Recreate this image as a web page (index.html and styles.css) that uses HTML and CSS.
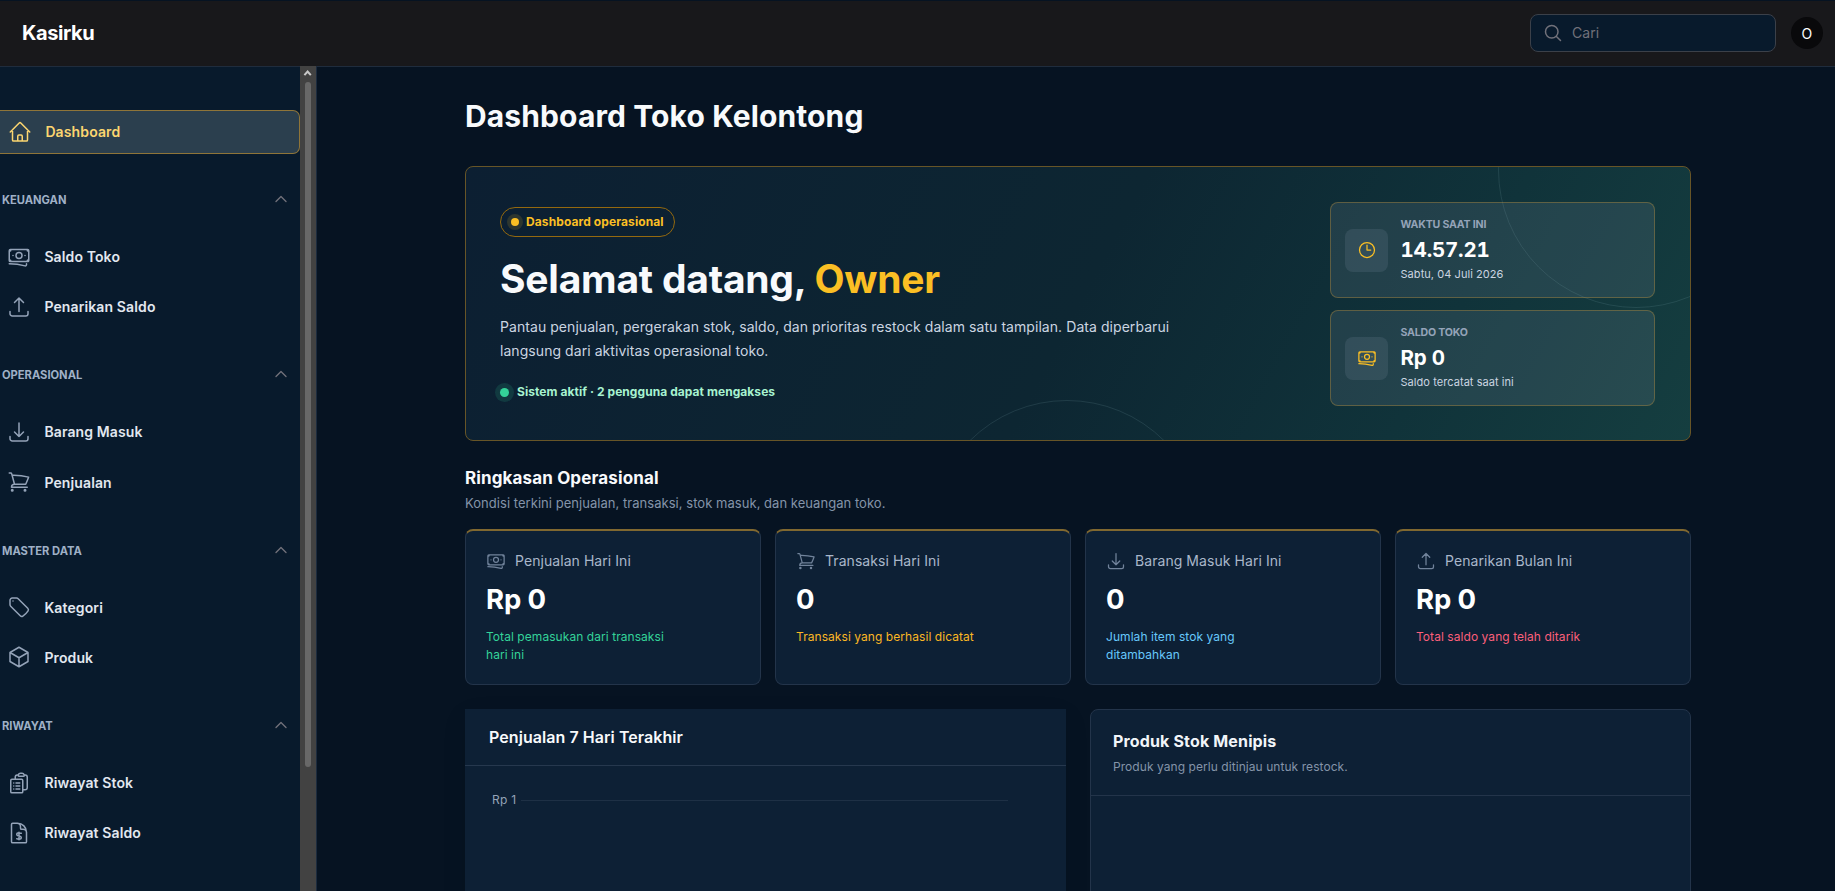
FILE: index.html
```html
<!DOCTYPE html>
<html lang="id">
<head>
<meta charset="utf-8">
<title>Dashboard Toko Kelontong - Kasirku</title>
<link rel="stylesheet" href="styles.css">
</head>
<body>
<svg class="sprite" aria-hidden="true">
  <symbol id="home" viewBox="0 0 24 24"><path d="m2.25 12 8.954-8.955c.44-.439 1.152-.439 1.591 0L21.75 12M4.5 9.75v10.125c0 .621.504 1.125 1.125 1.125H9.75v-4.875c0-.621.504-1.125 1.125-1.125h2.25c.621 0 1.125.504 1.125 1.125V21h4.125c.621 0 1.125-.504 1.125-1.125V9.75M8.25 21h8.25"/></symbol>
  <symbol id="banknotes" viewBox="0 0 24 24"><path d="M2.25 18.75a60.07 60.07 0 0 1 15.797 2.101c.727.198 1.453-.342 1.453-1.096V18.75M3.75 4.5v.75A.75.75 0 0 1 3 6h-.75m0 0v-.375c0-.621.504-1.125 1.125-1.125H20.25M2.25 6v9m18-10.5v.75c0 .414.336.75.75.75h.75m-1.5-1.5h.375c.621 0 1.125.504 1.125 1.125v9.75c0 .621-.504 1.125-1.125 1.125h-.375m1.5-1.5H21a.75.75 0 0 0-.75.75v.75m0 0H3.75m0 0h-.375a1.125 1.125 0 0 1-1.125-1.125V15m1.5 1.5v-.75A.75.75 0 0 0 3 15h-.75M15 10.5a3 3 0 1 1-6 0 3 3 0 0 1 6 0Zm3 0h.008v.008H18V10.5Zm-12 0h.008v.008H6V10.5Z"/></symbol>
  <symbol id="upload" viewBox="0 0 24 24"><path d="M3 16.5v2.25A2.25 2.25 0 0 0 5.25 21h13.5A2.25 2.25 0 0 0 21 18.75V16.5m-13.5-9L12 3m0 0 4.5 4.5M12 3v13.5"/></symbol>
  <symbol id="download" viewBox="0 0 24 24"><path d="M3 16.5v2.25A2.25 2.25 0 0 0 5.25 21h13.5A2.25 2.25 0 0 0 21 18.75V16.5M16.5 12 12 16.5m0 0L7.5 12m4.5 4.5V3"/></symbol>
  <symbol id="cart" viewBox="0 0 24 24"><path d="M2.25 3h1.386c.51 0 .955.343 1.087.835l.383 1.437M7.5 14.25a3 3 0 0 0-3 3h15.75m-12.75-3h11.218c1.121-2.3 2.1-4.684 2.924-7.138a60.114 60.114 0 0 0-16.536-1.84M7.5 14.25 5.106 5.272M6 20.25a.75.75 0 1 1-1.5 0 .75.75 0 0 1 1.5 0Zm12.75 0a.75.75 0 1 1-1.5 0 .75.75 0 0 1 1.5 0Z"/></symbol>
  <symbol id="tag" viewBox="0 0 24 24"><path d="M9.568 3H5.25A2.25 2.25 0 0 0 3 5.25v4.318c0 .597.237 1.17.659 1.591l9.581 9.581c.699.699 1.78.872 2.607.33a18.095 18.095 0 0 0 5.223-5.223c.542-.827.369-1.908-.33-2.607L11.16 3.66A2.25 2.25 0 0 0 9.568 3ZM6 6h.008v.008H6V6Z"/></symbol>
  <symbol id="cube" viewBox="0 0 24 24"><path d="m21 7.5-9-5.25L3 7.5m18 0-9 5.25m9-5.25v9l-9 5.25M3 7.5l9 5.25M3 7.5v9l9 5.25m0-9v9"/></symbol>
  <symbol id="clipboard" viewBox="0 0 24 24"><path d="M9 12h3.75M9 15h3.75M9 18h3.75m3 .75H18a2.25 2.25 0 0 0 2.25-2.25V6.108c0-1.135-.845-2.098-1.976-2.192a48.424 48.424 0 0 0-1.123-.08m-5.801 0c-.065.21-.1.433-.1.664 0 .414.336.75.75.75h4.5a.75.75 0 0 0 .75-.75 2.25 2.25 0 0 0-.1-.664m-5.8 0A2.251 2.251 0 0 1 13.5 2.25H15c1.012 0 1.867.668 2.15 1.586m-5.8 0c-.376.023-.75.05-1.124.08C9.095 4.01 8.25 4.973 8.25 6.108V8.25m0 0H4.875c-.621 0-1.125.504-1.125 1.125v11.25c0 .621.504 1.125 1.125 1.125h9.75c.621 0 1.125-.504 1.125-1.125V9.375c0-.621-.504-1.125-1.125-1.125H8.25ZM6.75 12h.008v.008H6.75V12Zm0 3h.008v.008H6.75V15Zm0 3h.008v.008H6.75V18Z"/></symbol>
  <symbol id="dollar-doc" viewBox="0 0 24 24"><path d="M19.5 14.25v-2.625a3.375 3.375 0 0 0-3.375-3.375h-1.5A1.125 1.125 0 0 1 13.5 7.125v-1.5a3.375 3.375 0 0 0-3.375-3.375H8.25m3.75 9v7.5m2.25-6.466a9.016 9.016 0 0 0-3.461-.203c-.536.072-.974.478-1.021 1.017a4.559 4.559 0 0 0-.018.402c0 .464.336.844.775.994l2.95 1.012c.44.15.775.53.775.994 0 .136-.006.27-.018.402-.047.539-.485.945-1.021 1.017a9.077 9.077 0 0 1-3.461-.203M10.5 2.25H5.625c-.621 0-1.125.504-1.125 1.125v17.25c0 .621.504 1.125 1.125 1.125h12.75c.621 0 1.125-.504 1.125-1.125V11.25a9 9 0 0 0-9-9Z"/></symbol>
  <symbol id="clock" viewBox="0 0 24 24"><path d="M12 6v6h4.5m4.5 0a9 9 0 1 1-18 0 9 9 0 0 1 18 0Z"/></symbol>
  <symbol id="search" viewBox="0 0 24 24"><path d="m21 21-5.197-5.197m0 0A7.5 7.5 0 1 0 5.196 5.196a7.5 7.5 0 0 0 10.607 10.607Z"/></symbol>
  <symbol id="chevron" viewBox="0 0 24 24"><path d="m4.5 15.75 7.5-7.5 7.5 7.5"/></symbol>
</svg>

<header class="topbar">
  <div class="brand">Kasirku</div>
  <div class="search"><svg class="icon icon-20"><use href="#search"/></svg><span>Cari</span></div>
  <div class="avatar">O</div>
</header>

<div class="shell">
  <aside class="sidebar">
    <nav class="nav">
      <a class="item active"><svg class="icon"><use href="#home"/></svg><span>Dashboard</span></a>

      <section class="group">
        <div class="group-head"><span>KEUANGAN</span><svg class="icon icon-16"><use href="#chevron"/></svg></div>
        <a class="item"><svg class="icon"><use href="#banknotes"/></svg><span>Saldo Toko</span></a>
        <a class="item"><svg class="icon"><use href="#upload"/></svg><span>Penarikan Saldo</span></a>
      </section>

      <section class="group">
        <div class="group-head"><span>OPERASIONAL</span><svg class="icon icon-16"><use href="#chevron"/></svg></div>
        <a class="item"><svg class="icon"><use href="#download"/></svg><span>Barang Masuk</span></a>
        <a class="item"><svg class="icon"><use href="#cart"/></svg><span>Penjualan</span></a>
      </section>

      <section class="group">
        <div class="group-head"><span>MASTER DATA</span><svg class="icon icon-16"><use href="#chevron"/></svg></div>
        <a class="item"><svg class="icon"><use href="#tag"/></svg><span>Kategori</span></a>
        <a class="item"><svg class="icon"><use href="#cube"/></svg><span>Produk</span></a>
      </section>

      <section class="group">
        <div class="group-head"><span>RIWAYAT</span><svg class="icon icon-16"><use href="#chevron"/></svg></div>
        <a class="item"><svg class="icon"><use href="#clipboard"/></svg><span>Riwayat Stok</span></a>
        <a class="item"><svg class="icon"><use href="#dollar-doc"/></svg><span>Riwayat Saldo</span></a>
      </section>
    </nav>
    <div class="scrollbar">
      <svg class="scroll-arrow" viewBox="0 0 16 16"><path d="M4.4 9.1 7.6 5.5l3.2 3.6"/></svg>
      <div class="thumb"></div>
    </div>
  </aside>

  <main class="main">
    <h1 class="page-title">Dashboard Toko Kelontong</h1>

    <section class="hero">
      <div class="ring ring-right"></div>
      <div class="ring ring-bottom"></div>
      <div class="hero-copy">
        <div class="badge"><i class="dot"></i><span>Dashboard operasional</span></div>
        <h2 class="hero-title">Selamat datang, <em>Owner</em></h2>
        <p class="hero-text">Pantau penjualan, pergerakan stok, saldo, dan prioritas restock dalam satu tampilan. Data diperbarui langsung dari aktivitas operasional toko.</p>
        <div class="status"><i class="dot green"></i>Sistem aktif · 2 pengguna dapat mengakses</div>
      </div>
      <div class="hero-side">
        <div class="info">
          <div class="info-icon"><svg class="icon icon-20"><use href="#clock"/></svg></div>
          <div class="info-body"><div class="info-label">WAKTU SAAT INI</div><div class="info-value">14.57.21</div><div class="info-sub">Sabtu, 04 Juli 2026</div></div>
        </div>
        <div class="info">
          <div class="info-icon"><svg class="icon icon-20"><use href="#banknotes"/></svg></div>
          <div class="info-body"><div class="info-label">SALDO TOKO</div><div class="info-value">Rp 0</div><div class="info-sub">Saldo tercatat saat ini</div></div>
        </div>
      </div>
    </section>

    <h3 class="section-title">Ringkasan Operasional</h3>
    <p class="section-sub">Kondisi terkini penjualan, transaksi, stok masuk, dan keuangan toko.</p>

    <section class="stats">
      <article class="stat">
        <div class="stat-head"><svg class="icon icon-20"><use href="#banknotes"/></svg><span>Penjualan Hari Ini</span></div>
        <div class="stat-value">Rp 0</div>
        <p class="stat-note success">Total pemasukan dari transaksi hari ini</p>
      </article>
      <article class="stat">
        <div class="stat-head"><svg class="icon icon-20"><use href="#cart"/></svg><span>Transaksi Hari Ini</span></div>
        <div class="stat-value">0</div>
        <p class="stat-note warning">Transaksi yang berhasil dicatat</p>
      </article>
      <article class="stat">
        <div class="stat-head"><svg class="icon icon-20"><use href="#download"/></svg><span>Barang Masuk Hari Ini</span></div>
        <div class="stat-value">0</div>
        <p class="stat-note info-tone">Jumlah item stok yang ditambahkan</p>
      </article>
      <article class="stat">
        <div class="stat-head"><svg class="icon icon-20"><use href="#upload"/></svg><span>Penarikan Bulan Ini</span></div>
        <div class="stat-value">Rp 0</div>
        <p class="stat-note danger">Total saldo yang telah ditarik</p>
      </article>
    </section>

    <section class="panels">
      <article class="panel chart">
        <header class="chart-head">Penjualan 7 Hari Terakhir</header>
        <div class="tick"><span>Rp 1</span><i></i></div>
      </article>
      <article class="panel low-stock">
        <header class="low-head">
          <h4>Produk Stok Menipis</h4>
          <p>Produk yang perlu ditinjau untuk restock.</p>
        </header>
      </article>
    </section>
  </main>
</div>
</body>
</html>
```
FILE: styles.css
```css
* { box-sizing: border-box; }

body {
  margin: 0;
  height: 891px;
  overflow: hidden;
  display: flex;
  flex-direction: column;
  padding-top: 1px;
  background: #061322;
  font-family: Inter, "Liberation Sans", sans-serif;
  font-size: 14px;
  letter-spacing: 0.06px;
  color: #f8fafc;
}

h1, h2, h3, h4, p { margin: 0; }

.sprite { position: absolute; width: 0; height: 0; }

.icon {
  width: 24px;
  height: 24px;
  flex: none;
  fill: none;
  stroke: currentColor;
  stroke-width: 1.5;
  stroke-linecap: round;
  stroke-linejoin: round;
}
.icon-20 { width: 20px; height: 20px; }
.icon-16 { width: 16px; height: 16px; stroke-width: 2; }

/* Top bar */
.topbar {
  flex: none;
  height: 66px;
  display: flex;
  align-items: center;
  padding: 0 12px 1px 22px;
  background: #18181b;
  border-bottom: 1px solid #1f2c3d;
}
.brand { flex: 1; font-size: 20px; font-weight: 700; letter-spacing: -0.42px; color: #fff; }
.search {
  width: 246px;
  height: 38px;
  display: flex;
  align-items: center;
  gap: 8px;
  padding: 0 12px;
  border: 1px solid #3b4049;
  border-radius: 8px;
  background: #081a2c;
  color: #71717a;
}
.search .icon { stroke-width: 1.8; }
.search span { padding: 0 0 1px 1px; }
.avatar {
  width: 32px;
  height: 32px;
  margin-left: 15px;
  border-radius: 50%;
  display: grid;
  place-items: center;
  background: #09090b;
  color: #fff;
  font-size: 14px;
}

.shell { flex: 1; display: flex; min-height: 0; }

/* Sidebar */
.sidebar {
  flex: none;
  width: 317px;
  display: flex;
  background: #081a2c;
  border-right: 1px solid #1c2b3e;
}
.nav { flex: 1; padding-top: 43px; }
.item {
  height: 44px;
  display: flex;
  align-items: center;
  gap: 13.4px;
  padding-left: 7px;
  color: #e2e8f0;
  font-weight: 600;
  letter-spacing: 0.12px;
}
.item .icon { color: #94a3b8; }
.item + .item { margin-top: 6.2px; }
.item.active {
  padding: 0 0 1px 8px;
  border: 1px solid #8f7539;
  border-left: 0;
  border-radius: 0 7px 7px 0;
  background: #2b3f4e;
  color: #fcd670;
}
.item.active .icon { color: #fcd670; }
.group { height: 175.4px; padding-top: 33px; }
.group-head {
  height: 24px;
  margin-bottom: 23.5px;
  display: flex;
  align-items: center;
  justify-content: space-between;
  padding: 0 11px 0 2px;
  font-size: 11.2px;
  font-weight: 700;
  letter-spacing: -0.02px;
  color: #9fb0c6;
}
.group-head span { padding-top: 2px; }
.group-head .icon { color: #71717a; }
.scrollbar { flex: none; width: 16px; margin-top: -1px; background: #424242; }
.scroll-arrow {
  display: block;
  width: 16px;
  height: 16px;
  fill: none;
  stroke: #c8c8c8;
  stroke-width: 2;
}
.thumb { width: 6px; height: 685px; margin-left: 5px; border-radius: 3px; background: #686868; }

/* Content */
.main { flex: 1; padding: 30px 144px 0 148px; overflow: hidden; }
.page-title { height: 69px; font-size: 30px; line-height: 39px; font-weight: 700; letter-spacing: 0.12px; }

.hero {
  position: relative;
  overflow: hidden;
  height: 275px;
  display: flex;
  justify-content: space-between;
  padding: 35px;
  border: 1px solid #675527;
  border-radius: 8px;
  background: linear-gradient(118deg, #0c1f32 0%, #0d2632 50%, #10333a 78%, #153e40 100%);
}
.ring { position: absolute; width: 276px; height: 276px; border: 1px solid rgba(148, 190, 200, 0.14); border-radius: 50%; }
.ring-right { right: -84px; top: -135px; }
.ring-bottom { left: 463px; top: 233px; }
.hero-copy { width: 700px; padding-top: 5px; margin-left: -1px; }
.badge {
  width: 175px;
  height: 30px;
  display: flex;
  align-items: center;
  gap: 7px;
  padding-left: 10px;
  border: 1px solid #94690f;
  border-radius: 15px;
  color: #fbbf24;
  font-size: 12px;
  font-weight: 700;
  letter-spacing: 0.1px;
}
.badge span { padding-bottom: 1px; }
.dot { width: 8px; height: 8px; border-radius: 50%; background: #fbbf24; box-shadow: 0 0 0 4px rgba(251, 191, 36, 0.14); }
.dot.green { width: 9px; height: 9px; background: #34d399; box-shadow: 0 0 0 5px rgba(52, 211, 153, 0.14); }
.hero-title { margin-top: 18px; font-size: 39px; line-height: 48px; font-weight: 700; letter-spacing: -0.23px; }
.hero-title em { font-style: normal; color: #fbbf24; }
.hero-text { margin-top: 12px; font-size: 14px; line-height: 24px; color: #cbd5e1; }
.status {
  display: flex;
  align-items: center;
  gap: 8px;
  margin-top: 20px;
  line-height: 18px;
  color: #a7f3d0;
  font-size: 12px;
  font-weight: 700;
}
.hero-side { width: 325px; display: grid; grid-template-rows: 96px 96px; gap: 12px; position: relative; }
.info {
  display: flex;
  align-items: center;
  gap: 12.5px;
  padding-left: 14px;
  border: 1px solid rgba(180, 140, 60, 0.42);
  border-radius: 8px;
  background: rgba(148, 163, 184, 0.15);
}
.info-body { padding-bottom: 2px; }
.info-icon { width: 43px; height: 43px; border-radius: 8px; display: grid; place-items: center; background: rgba(148, 163, 184, 0.15); color: #fbbf24; }
.info-label { font-size: 10.6px; line-height: 14px; font-weight: 700; letter-spacing: -0.2px; color: #94a3b8; }
.info-value { margin-top: 6px; font-size: 20.5px; line-height: 24px; font-weight: 700; font-variant-numeric: tabular-nums; letter-spacing: -0.18px; color: #fff; }
.info-sub { margin-top: 5px; font-size: 11px; line-height: 14px; color: #cbd5e1; }

.section-title { margin-top: 26px; font-size: 17px; line-height: 22px; font-weight: 700; letter-spacing: 0.13px; }
.section-sub { margin-top: 4px; font-size: 13px; line-height: 20px; letter-spacing: 0.04px; color: #8494a9; }

.stats { margin-top: 16px; display: grid; grid-template-columns: repeat(4, 1fr); gap: 14px; }
.stat {
  height: 156px;
  padding: 20px 20px 0;
  border: 1px solid #23344a;
  border-top: 2px solid #806830;
  border-radius: 8px;
  background: #0d2035;
}
.stat-head { display: flex; align-items: center; gap: 9px; line-height: 20px; color: #a9b7ca; }
.stat-head .icon { color: #71839b; }
.stat-value { margin-top: 10px; font-size: 27.5px; line-height: 36px; font-weight: 700; letter-spacing: -0.1px; color: #fff; }
.stat-note { width: 190px; margin-top: 11px; font-size: 12px; line-height: 18px; }
.success { color: #34d399; }
.warning { color: #fbb724; }
.info-tone { color: #67c8fb; }
.danger { color: #fb5f7a; }

.panels { margin-top: 24px; display: grid; grid-template-columns: 1fr 1fr; gap: 24px; }
.panel { height: 300px; background: #0d2035; }
.chart { box-shadow: 0 8px 24px rgba(0, 0, 0, 0.08); }
.chart-head { height: 57px; padding: 0 24px; border-bottom: 1px solid #26384e; font-size: 16px; line-height: 57px; font-weight: 600; }
.tick { display: flex; align-items: center; gap: 4px; padding: 25px 58px 0 27px; font-size: 12px; line-height: 18px; letter-spacing: 0.3px; color: #94a3b8; }
.tick i { flex: 1; height: 1px; background: #1e3045; }
.low-stock { border: 1px solid #23344a; border-radius: 8px; }
.low-head { height: 86px; padding: 20px 22px 0; border-bottom: 1px solid #23344a; }
.low-head h4 { font-size: 16px; line-height: 22px; font-weight: 700; letter-spacing: 0.15px; color: #f1f5f9; }
.low-head p { margin-top: 5px; font-size: 12px; line-height: 20px; color: #8494a9; }
```
